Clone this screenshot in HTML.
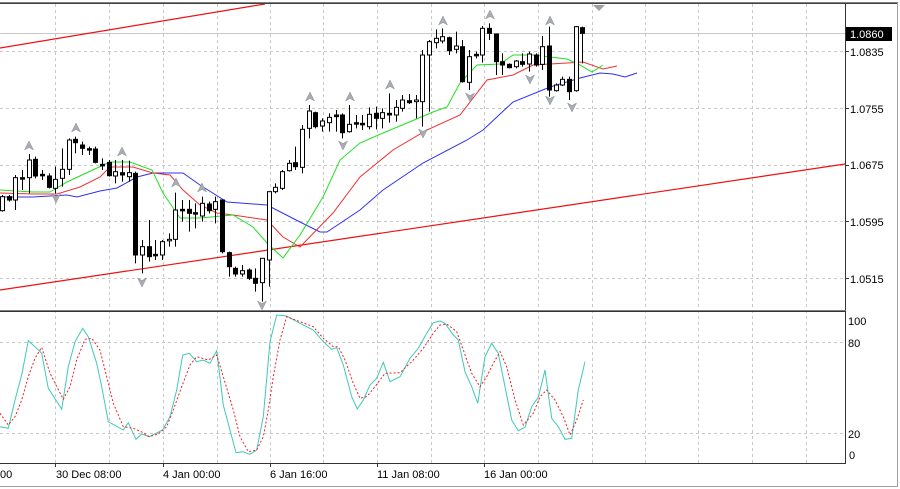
<!DOCTYPE html>
<html><head><meta charset="utf-8"><style>
html,body{margin:0;padding:0;background:#fff;width:900px;height:489px;overflow:hidden}
svg{display:block;font-family:"Liberation Sans",Tahoma,sans-serif}
</style></head><body>
<svg id="s" width="900" height="489" viewBox="0 0 900 489" xmlns="http://www.w3.org/2000/svg">
<rect width="900" height="489" fill="#fff"/>
<g stroke="#c8c8c8" stroke-width="1" stroke-dasharray="3,3" shape-rendering="crispEdges">
<line x1="55.5" y1="4" x2="55.5" y2="463"/><line x1="109.5" y1="4" x2="109.5" y2="463"/><line x1="163.5" y1="4" x2="163.5" y2="463"/><line x1="217.5" y1="4" x2="217.5" y2="463"/><line x1="270.5" y1="4" x2="270.5" y2="463"/><line x1="323.5" y1="4" x2="323.5" y2="463"/><line x1="377.5" y1="4" x2="377.5" y2="463"/><line x1="431.5" y1="4" x2="431.5" y2="463"/><line x1="484.5" y1="4" x2="484.5" y2="463"/><line x1="538.5" y1="4" x2="538.5" y2="463"/><line x1="592.5" y1="4" x2="592.5" y2="463"/><line x1="645.5" y1="4" x2="645.5" y2="463"/><line x1="698.5" y1="4" x2="698.5" y2="463"/><line x1="752.5" y1="4" x2="752.5" y2="463"/><line x1="806.5" y1="4" x2="806.5" y2="463"/>
<line x1="0" y1="51.5" x2="845" y2="51.5"/><line x1="0" y1="108.5" x2="845" y2="108.5"/><line x1="0" y1="165.5" x2="845" y2="165.5"/><line x1="0" y1="221.5" x2="845" y2="221.5"/><line x1="0" y1="278.5" x2="845" y2="278.5"/>
<line x1="0" y1="342.5" x2="845" y2="342.5"/><line x1="0" y1="433.5" x2="845" y2="433.5"/>
</g>
<line x1="0" y1="33.5" x2="845" y2="33.5" stroke="#c8c8c8" shape-rendering="crispEdges"/>
<line x1="0" y1="48" x2="265" y2="4" stroke="#f01010" stroke-width="1.2"/>
<line x1="0" y1="290" x2="845" y2="164" stroke="#f01010" stroke-width="1.2"/>
<g id="ma" fill="none" stroke-width="1">
<polyline stroke="#3030f0" points="0,197 33,197 67,195 77,197 100,191 117,188 137,177 153,173 183,173 200,185 227,202 267,205 300,222 320,232 327,232 360,210 383,190 423,163 467,140 483,130 513,102 550,87 580,78 600,73 613,74 625,77 637,73"/>
<polyline stroke="#f03030" points="0,193 33,194 57,194 80,187 100,177 110,167 133,167 153,173 170,175 183,190 200,205 217,213 233,215 267,220 283,237 300,247 333,213 360,177 393,150 427,130 460,115 487,80 513,75 533,65 567,63 583,62 603,69 617,66"/>
<polyline stroke="#20e020" points="0,190 33,192 50,192 67,182 97,168 110,162 130,162 152,170 163,193 180,218 200,218 233,215 253,227 267,243 283,258 300,235 323,197 340,160 360,143 383,133 407,123 433,112 447,107 460,83 477,65 500,64 513,55 533,55 567,59 580,65 592,72 603,65"/>
</g>
<g id="cd"></g>
<g id="ar" fill="#a8acb4" stroke="#8a8e96" stroke-width="0.5"></g>
<polygon points="593,5 605,5 599,11" fill="#a0a0a0"/>
<g fill="none" stroke-width="1">
<polyline id="st" stroke="#40c8b8"/>
<polyline id="sr" stroke="#f02020" stroke-dasharray="2,2"/>
</g>
<!-- frames -->
<g shape-rendering="crispEdges" fill="none">
<line x1="0" y1="2.5" x2="898" y2="2.5" stroke="#808080"/>
<line x1="0" y1="3.5" x2="898" y2="3.5" stroke="#404040"/>
<line x1="845.5" y1="4" x2="845.5" y2="464" stroke="#333"/>
<line x1="0" y1="310.5" x2="846" y2="310.5" stroke="#808080"/>
<line x1="0" y1="311.5" x2="846" y2="311.5" stroke="#333"/>
<line x1="0" y1="463.5" x2="846" y2="463.5" stroke="#333"/>
<line x1="897.5" y1="3" x2="897.5" y2="487" stroke="#a0a0a0"/>
<line x1="0" y1="486.5" x2="898" y2="486.5" stroke="#a0a0a0"/>
<line x1="845" y1="51.5" x2="849" y2="51.5" stroke="#333"/><line x1="845" y1="108.5" x2="849" y2="108.5" stroke="#333"/><line x1="845" y1="165.5" x2="849" y2="165.5" stroke="#333"/><line x1="845" y1="221.5" x2="849" y2="221.5" stroke="#333"/><line x1="845" y1="278.5" x2="849" y2="278.5" stroke="#333"/>
<line x1="55.5" y1="463" x2="55.5" y2="467" stroke="#333"/><line x1="163.5" y1="463" x2="163.5" y2="467" stroke="#333"/><line x1="270.5" y1="463" x2="270.5" y2="467" stroke="#333"/><line x1="377.5" y1="463" x2="377.5" y2="467" stroke="#333"/><line x1="484.5" y1="463" x2="484.5" y2="467" stroke="#333"/>
</g>
<rect x="846" y="27" width="46" height="14" fill="#000"/>
<g font-size="11" fill="#000">
<text x="850" y="38" fill="#fff">1.0860</text>
<text x="850" y="56">1.0835</text>
<text x="850" y="113">1.0755</text>
<text x="850" y="169">1.0675</text>
<text x="850" y="226">1.0595</text>
<text x="850" y="283">1.0515</text>
<text x="848" y="325">100</text>
<text x="848" y="347">80</text>
<text x="848" y="438">20</text>
<text x="849" y="459">0</text>
<text x="-3" y="478">:00</text>
<text x="56" y="478">30 Dec 08:00</text>
<text x="163" y="478">4 Jan 00:00</text>
<text x="270" y="478">6 Jan 16:00</text>
<text x="377" y="478">11 Jan 08:00</text>
<text x="484" y="478">16 Jan 00:00</text>
</g>
</svg>
<script>
var D=[[590,632,585,635,1],[590,600,585,605,0],[533,600,525,630,1],[533,537,510,570,0],[480,533,462,580,1],[478,528,470,535,0],[523,527,510,540,0],[528,562,520,565,0],[538,565,500,580,1],[508,535,445,560,1],[420,508,415,525,1],[418,428,410,460,0],[435,445,425,465,0],[446,450,440,465,0],[447,487,440,490,0],[493,497,475,510,0],[487,527,480,530,0],[515,528,480,550,1],[518,525,480,545,0],[518,530,482,545,1],[520,765,515,790,0],[740,765,720,820,1],[740,770,660,785,0],[763,767,720,780,0],[725,765,720,780,1],[718,722,700,740,1],[630,718,578,740,1],[628,632,600,665,0],[628,640,600,695,0],[638,642,610,685,0],[610,648,590,665,1],[612,632,605,640,0],[605,628,590,670,1],[600,755,598,760,0],[758,800,755,830,0],[805,822,800,830,0],[812,822,795,830,1],[810,835,805,840,0],[835,850,805,875,0],[775,848,775,905,1],[575,780,575,860,1],[562,575,550,580,1],[515,565,510,570,1],[490,512,480,515,1],[488,500,440,510,0],[388,502,375,520,1],[333,385,315,415,1],[338,380,335,385,0],[363,378,355,395,1],[352,368,340,395,1],[345,350,330,395,0],[345,398,340,415,0],[373,395,315,398,1],[368,372,345,385,0],[370,374,345,390,0],[343,380,322,388,1],[340,355,320,388,0],[338,355,325,385,1],[340,345,280,368,0],[322,345,300,365,1],[300,325,285,335,1],[302,308,282,312,0],[300,305,285,355,1],[165,305,150,380,1],[125,165,120,335,1],[115,128,88,145,1],[110,123,85,130,1],[113,152,110,165,0],[138,148,95,160,1],[140,245,120,248,0],[170,247,150,270,1],[163,167,155,175,0],[85,165,78,188,1],[85,100,70,120,0],[102,185,100,225,0],[185,195,160,225,0],[193,203,190,205,0],[183,200,180,205,1],[185,193,160,200,0],[162,192,155,215,1],[165,195,160,200,0],[140,193,108,210,1],[138,270,80,290,0],[255,272,250,275,1],[238,255,230,258,1],[238,275,230,300,0],[80,272,78,275,1],[83,100,80,190,0]];
var NS="http://www.w3.org/2000/svg",cd=document.getElementById("cd"),h="";
D.forEach(function(d,i){var x=Math.round(2+6.67*i)+0.5;var t=d[0]/3,b=d[1]/3,wt=d[2]/3,wb=d[3]/3;if(b-t<1.5){b=t+1.5;}
h+='<line x1="'+x+'" x2="'+x+'" y1="'+wt+'" y2="'+wb+'" stroke="#000"/>';
h+='<rect x="'+(x-2)+'" y="'+t+'" width="4" height="'+(b-t)+'" fill="'+(d[4]?'#fff':'#000')+'" stroke="#000" stroke-width="1"/>';});
cd.innerHTML=h;
var A=[[29,146,1],[76,128,1],[122,152,1],[176,183,1],[202,188,1],[310,97,1],[350,97,1],[390,85,1],[443,21,1],[490,15,1],[550,21,1],[56,198,0],[142,282,0],[262,305,0],[343,145,0],[423,133,0],[470,97,0],[530,79,0],[550,100,0],[572,107,0]];
var ah="";A.forEach(function(a){var x=a[0],y=a[1],s=a[2]?1:-1;ah+='<polygon points="'+x+','+(y-5*s)+' '+(x+4.5)+','+(y+4*s)+' '+x+','+(y+1.5*s)+' '+(x-4.5)+','+(y+4*s)+'"/>';});
document.getElementById("ar").innerHTML=ah;
function P(a,off){return a.map(function(p){return (p[0]/3+off).toFixed(1)+','+(310+p[1]/3).toFixed(1)}).join(' ');}
var t1=[[0,350],[25,355],[45,270],[65,195],[85,92],[105,110],[125,130],[145,235],[185,298],[205,170],[225,95],[248,55],[265,80],[290,160],[305,230],[325,335],[370,360],[385,338],[408,388],[425,372],[448,380],[468,370],[488,360],[510,320],[530,240],[548,135],[568,130],[590,155],[610,150],[630,160],[650,122],[670,285],[708,428],[728,425],[750,433],[770,420],[790,320],[810,95],[830,15],[860,18],[900,40]];
var t2=[[40,60],[70,95],[95,118],[110,113],[130,165],[155,260],[172,297],[190,270],[210,225],[230,205],[250,157],[270,215],[300,200],[330,145],[355,115],[380,70],[400,38],[420,33],[435,40],[460,75],[475,90],[495,185],[515,230],[533,280],[555,140],[575,100],[595,130],[635,330],[655,362],[675,352],[695,290],[715,262],[735,180],[755,325],[775,350],[795,388],[815,385],[835,240],[855,155]];
var r1=[[0,310],[25,345],[45,320],[65,270],[85,200],[105,145],[125,112],[150,190],[190,268],[210,230],[230,150],[255,88],[275,85],[300,120],[320,200],[340,280],[370,350],[400,355],[430,368],[448,380],[475,372],[500,350],[520,300],[545,230],[570,165],[590,140],[625,150],[650,135],[670,200],[700,300],[720,380],[745,425],[770,420],[790,380],[805,300],[820,200],[840,90],[860,20],[900,35]];
var r2=[[40,50],[70,85],[100,110],[115,110],[135,150],[160,220],[180,265],[200,260],[225,230],[255,190],[300,188],[340,150],[370,115],[400,70],[420,45],[440,42],[470,65],[490,120],[515,190],[540,230],[560,200],[580,160],[600,125],[620,170],[645,270],[670,345],[700,310],[720,260],[740,240],[765,270],[790,320],[810,375],[830,330],[850,270]];
document.getElementById("st").setAttribute("points",P(t1,0)+' '+P(t2,300));
document.getElementById("sr").setAttribute("points",P(r1,0)+' '+P(r2,300));
</script>
</body></html>
